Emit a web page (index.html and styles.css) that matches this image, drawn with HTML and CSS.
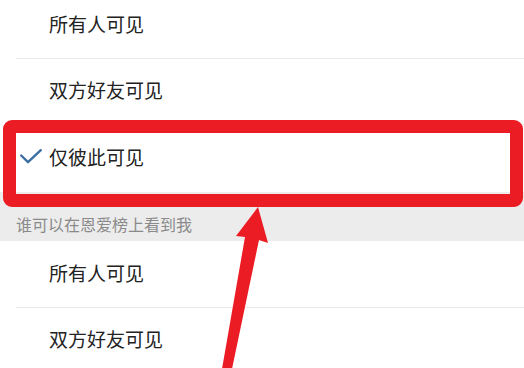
FILE: index.html
```html
<!DOCTYPE html>
<html lang="zh-CN">
<head>
  <meta charset="UTF-8">
  <meta name="viewport" content="width=device-width, initial-scale=1.0">
  <title>隐私设置</title>
  <link rel="stylesheet" href="styles.css">
</head>
<body>
  <div class="page">
    <ul class="options">
      <li class="option">所有人可见</li>
      <li class="option">双方好友可见</li>
      <li class="option selected">
        <svg class="check" viewBox="0 0 22 15" width="22" height="15">
          <path d="M1.2 6.5 L8 13.2 L20.8 1.2" fill="none" stroke="#3d6fa3" stroke-width="2.4" stroke-linecap="round" stroke-linejoin="round"/>
        </svg>
        仅彼此可见
      </li>
    </ul>
    <div class="section-title">谁可以在恩爱榜上看到我</div>
    <ul class="options">
      <li class="option">所有人可见</li>
      <li class="option">双方好友可见</li>
    </ul>

    <!-- annotation -->
    <div class="highlight"></div>
    <svg class="arrow" viewBox="0 0 524 368" width="524" height="368">
      <polygon points="258,207 268,243 259,240 232,369 222,369 245,237 236,236" fill="#ec1c24"/>
    </svg>
  </div>
</body>
</html>
```

FILE: styles.css
```css
body {
  margin: 0;
  background-color: #fff;
  font-family: "Noto Sans CJK SC", "Noto Sans", sans-serif;
  color: #222;
  overflow: hidden;
}
.page {
  position: relative;
  width: 524px;
  height: 368px;
  overflow: hidden;
}
.options {
  list-style: none;
  margin: 0;
  padding: 0;
  background-color: #fff;
}
.options:first-child {
  margin-top: -8px;
}
.option {
  position: relative;
  height: 66px;
  box-sizing: border-box;
  display: flex;
  align-items: center;
  padding: 0 0 4px 49px;
  font-size: 19px;
}
.option + .option::before {
  content: "";
  position: absolute;
  top: 0;
  left: 16px;
  right: 0;
  height: 1px;
  background-color: #e8e8e8;
}
.option.selected {
  height: 68px;
}
.check {
  position: absolute;
  left: 20px;
  top: 25px;
}
.section-title {
  height: 49px;
  box-sizing: border-box;
  padding: 21px 0 0 16px;
  background-color: #ececec;
  color: #8a8a8a;
  font-size: 16px;
  line-height: 22px;
}
.highlight {
  position: absolute;
  left: 3px;
  top: 120px;
  width: 520px;
  height: 87px;
  box-sizing: border-box;
  border: 13.5px solid #ec1c24;
  border-radius: 9px;
}
.arrow {
  position: absolute;
  left: 0;
  top: 0;
}
```
